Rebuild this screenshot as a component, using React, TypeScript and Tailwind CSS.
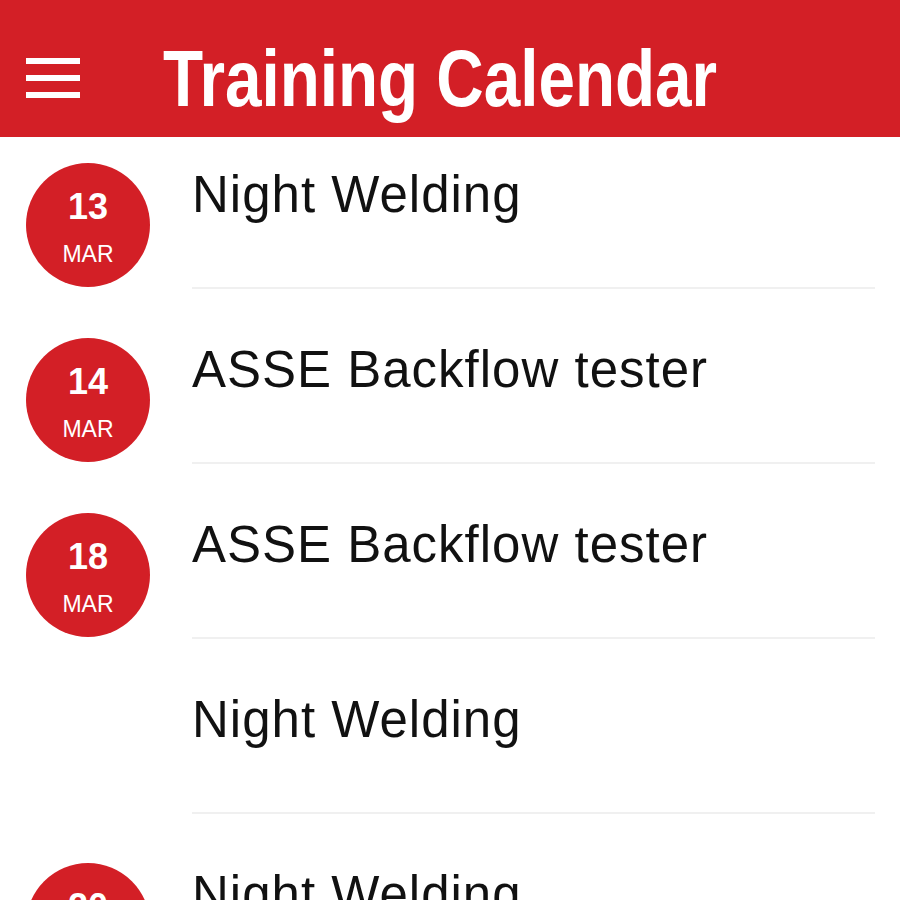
import React from "react";

interface Session {
  day?: string;
  month?: string;
  title: string;
}

const SESSIONS: Session[] = [
  { day: "13", month: "MAR", title: "Night Welding" },
  { day: "14", month: "MAR", title: "ASSE Backflow tester" },
  { day: "18", month: "MAR", title: "ASSE Backflow tester" },
  { title: "Night Welding" },
  { day: "20", month: "MAR", title: "Night Welding" },
];

function DateBadge({ day, month }: { day: string; month: string }) {
  return (
    <div className="flex h-[124px] w-[124px] flex-col items-center rounded-full bg-[#d31f26] pt-[26px] text-white">
      <div className="text-[36px] leading-[36px] font-bold">{day}</div>
      <div className="mt-[18px] text-[23px] leading-[23px]">{month}</div>
    </div>
  );
}

function Row({ s }: { s: Session }) {
  return (
    <div className="flex h-[175px] shrink-0">
      <div className="w-[192px] shrink-0 pl-[26px] pt-[26px]">
        {s.day && s.month && <DateBadge day={s.day} month={s.month} />}
      </div>
      <div className="flex flex-1 flex-col">
        <div className="pt-[32px] text-[51px] leading-[51px] tracking-[1px] text-[#111]">{s.title}</div>
        <div className="mt-auto mb-[23px] mr-[25px] h-[2px] bg-[#f0f0f0]" />
      </div>
    </div>
  );
}

export default function App() {
  return (
    <div className="flex h-[900px] w-[900px] flex-col overflow-hidden bg-white font-['Liberation_Sans',Arial,sans-serif]">
      <header className="flex h-[137px] shrink-0 items-start bg-[#d31f26] text-white">
        <div className="ml-[26px] mt-[58px] flex w-[54px] flex-col gap-[11px]">
          <span className="h-[6px] bg-white" />
          <span className="h-[6px] bg-white" />
          <span className="h-[6px] bg-white" />
        </div>
        <h1 className="ml-[83px] mt-[39px] origin-left scale-x-[0.82] whitespace-nowrap text-[80px] leading-[80px] font-bold">
          Training Calendar
        </h1>
      </header>
      {SESSIONS.map((s, i) => (
        <Row key={i} s={s} />
      ))}
    </div>
  );
}
